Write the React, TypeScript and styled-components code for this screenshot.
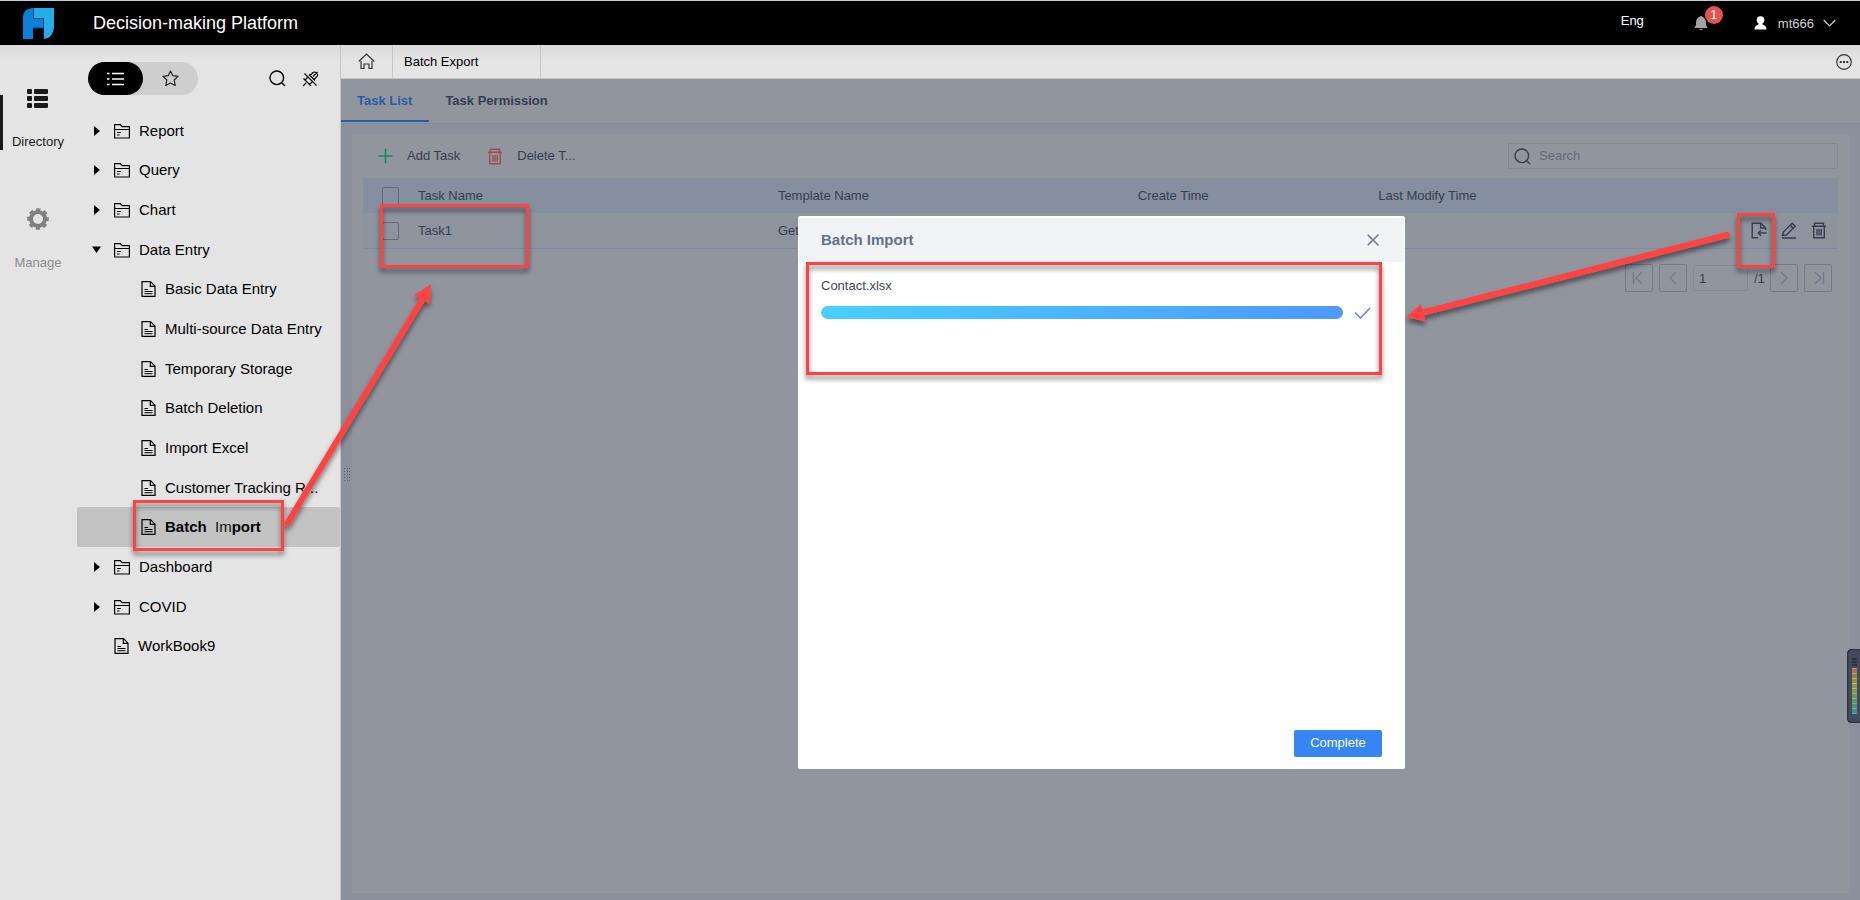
import React from "react";
import styled, { createGlobalStyle, css } from "styled-components";

const GlobalStyle = createGlobalStyle`
  *, *::before, *::after { box-sizing: border-box; }
  body { margin: 0; background: #e4e4e4; }
  body, button, input, table { font-family: "Liberation Sans", Arial, sans-serif; font-size: 13px; }
  svg { display: block; flex: none; }
`;

const Page = styled.div`
  position: relative;
  display: flex;
  flex-direction: column;
  min-height: 100vh;
  overflow: hidden;
  color: #000;
`;

const plainButton = css`
  padding: 0;
  border: 0;
  background: none;
  color: inherit;
  cursor: pointer;
`;

/* Header */

const Header = styled.header`
  display: flex;
  align-items: center;
  height: 45px;
  padding: 0 24px 0 22px;
  border-top: 1px solid #c9cdc9;
  background: #000;
  color: #fff;
`;

const Title = styled.h1`
  flex: 1;
  margin: 0 0 0 38px;
  font-size: 18px;
  font-weight: 400;
  line-height: 20px;
`;

const LanguageButton = styled.button`
  ${plainButton}
  height: 22px;
  margin: 0 50px 6px 0;
`;

const BellButton = styled.button`
  ${plainButton}
  position: relative;
  width: 14px;
  height: 16px;
  margin-right: 46px;
  color: #a3a3a3;
`;

const Badge = styled.span`
  position: absolute;
  top: -9px;
  left: 11px;
  width: 18px;
  height: 18px;
  border-radius: 9px;
  background: #e65251;
  color: #fff;
  font-size: 13px;
  line-height: 18px;
  text-align: center;
`;

const UserButton = styled.button`
  ${plainButton}
  display: flex;
  align-items: center;
  height: 22px;
  color: #d0d0d0;
  span { margin: 0 9px 0 11px; }
`;

const Body = styled.div`
  display: flex;
  flex: 1;
  background: linear-gradient(#d9d9d9, #e4e4e4 14px);
`;

/* Left rail */

const Rail = styled.nav`
  display: flex;
  flex-direction: column;
  gap: 66px;
  width: 77px;
  padding-top: 50px;
`;

const RailItem = styled.button<{ $active?: boolean }>`
  ${plainButton}
  display: flex;
  flex-direction: column;
  align-items: center;
  justify-content: space-between;
  height: 55px;
  padding-bottom: 1px;
  border-left: 3px solid ${(p) => (p.$active ? "#1a1a1a" : "transparent")};
  padding-right: 4px;
  color: ${(p) => (p.$active ? "#1a1a1a" : "#8c8c8c")};
  line-height: 15px;
  svg { margin-top: -9px; }
`;

/* Directory tree */

const Sidebar = styled.aside`
  display: flex;
  flex-direction: column;
  width: 264px;
  border-right: 1px solid #c6c6c6;
`;

const SideTools = styled.div`
  display: flex;
  align-items: center;
  gap: 16px;
  height: 33px;
  margin: 17px 21px 16px 11px;
`;

const Switcher = styled.div`
  display: flex;
  width: 110px;
  height: 33px;
  margin-right: auto;
  border-radius: 17px;
  background: #cecece;
`;

const SwitchButton = styled.button<{ $active?: boolean }>`
  ${plainButton}
  display: flex;
  flex: 1;
  align-items: center;
  justify-content: center;
  border-radius: 17px;
  background: ${(p) => (p.$active ? "#000" : "transparent")};
  color: ${(p) => (p.$active ? "#fff" : "#222")};
`;

const IconButton = styled.button`
  ${plainButton}
  display: inline-flex;
  align-items: center;
  justify-content: center;
`;

const Tree = styled.ul`
  display: grid;
  grid-template-columns: minmax(0, 1fr);
  grid-auto-rows: 1fr;
  height: 555px;
  margin: 0;
  padding: 0;
  list-style: none;
`;

const TreeRow = styled.li<{ $level: number; $selected?: boolean }>`
  display: flex;
  align-items: center;
  padding: 0 13px 0 ${(p) => (p.$level === 2 ? 64 : 15)}px;
  border-radius: 2px;
  background: ${(p) => (p.$selected ? "#c2c2c2" : "transparent")};
  font-weight: ${(p) => (p.$selected ? 700 : 400)};
`;

const Caret = styled.span`
  display: flex;
  flex: none;
  width: 22px;
`;

const TreeLink = styled.a`
  display: flex;
  align-items: center;
  gap: 9px;
  min-width: 0;
  color: #000;
  font-size: 15px;
  line-height: 20px;
  text-decoration: none;
  white-space: nowrap;
`;

const TreeText = styled.span`
  overflow: hidden;
  text-overflow: ellipsis;
`;

const Patch = styled.span`
  color: #111;
  font-weight: 400;
`;

/* Main area */

const Main = styled.main`
  display: flex;
  flex: 1;
  flex-direction: column;
  min-width: 0;
`;

const PageTabs = styled.div`
  display: flex;
  align-items: center;
  height: 34px;
  padding-right: 8px;
  border-bottom: 1px solid #c6c6c6;
`;

const HomeTab = styled.button`
  ${plainButton}
  display: flex;
  align-items: center;
  justify-content: center;
  width: 52px;
  height: 33px;
  border-right: 1px solid #c6c6c6;
`;

const PageTab = styled.button`
  ${plainButton}
  width: 148px;
  height: 33px;
  margin-right: auto;
  padding-left: 11px;
  border-right: 1px solid #c6c6c6;
  text-align: left;
`;

const Workspace = styled.section`
  position: relative;
  display: flex;
  flex: 1;
  flex-direction: column;
  background: #8a919c;
  color: #353e50;
`;

const SubTabs = styled.div`
  display: flex;
  height: 45px;
  border-bottom: 1px solid #848b97;
  background: #91959e;
`;

const SubTab = styled.button<{ $active?: boolean }>`
  ${plainButton}
  height: 43px;
  padding: 2px 17px 0 16px;
  border-bottom: 2px solid ${(p) => (p.$active ? "#2c5ba5" : "transparent")};
  color: ${(p) => (p.$active ? "#2c5ba5" : "#353e50")};
  font-weight: 700;
`;

const Panel = styled.div`
  flex: 1;
  margin: 10px 11px 7px;
  padding: 9px 11px;
  background: #91959e;
`;

const Toolbar = styled.div`
  display: flex;
  align-items: center;
  height: 26px;
  margin-bottom: 9px;
  padding-left: 15px;
`;

const ToolButton = styled.button`
  ${plainButton}
  display: flex;
  align-items: center;
  gap: 14px;
  margin-right: 27px;
  span { padding-bottom: 2px; }
`;

const SearchBox = styled.label`
  display: flex;
  align-items: center;
  gap: 8px;
  width: 330px;
  height: 26px;
  margin-left: auto;
  padding: 0 5px;
  border: 1px solid #838a97;
  border-radius: 2px;
`;

const SearchInput = styled.input`
  flex: 1;
  min-width: 0;
  padding: 0 0 2px;
  border: 0;
  outline: 0;
  background: none;
  color: #353e50;
  &::placeholder { color: #646b7a; opacity: 1; }
`;

const Table = styled.table`
  width: 100%;
  border-collapse: separate;
  border-spacing: 0;
  table-layout: fixed;
  th, td {
    height: 35px;
    padding: 0 8px;
    font-weight: 400;
    line-height: 16px;
    text-align: left;
    white-space: nowrap;
  }
  th { background: #858f9f; }
  td { height: 36px; background: #8e949d; border-bottom: 1px solid #7c8ba5; }
  th:first-child, td:first-child { padding: 0 0 0 19px; }
  td:last-child { padding-right: 11px; }
`;

const CheckColumn = styled.col`
  width: 47px;
`;

const Column = styled.col<{ $share?: string }>`
  width: ${(p) => p.$share ?? "auto"};
`;

const Check = styled.input`
  display: block;
  width: 17px;
  height: 18px;
  margin: 0;
  appearance: none;
  border: 1px solid #626a79;
  border-radius: 2px;
`;

const Actions = styled.div`
  display: flex;
  justify-content: flex-end;
  gap: 14px;
`;

const Pager = styled.nav`
  display: flex;
  align-items: center;
  justify-content: flex-end;
  gap: 6px;
  margin-top: 15px;
  padding-right: 6px;
`;

const PageButton = styled.button`
  ${plainButton}
  display: flex;
  align-items: center;
  justify-content: center;
  width: 28px;
  height: 28px;
  border: 1px solid #737b8a;
  border-radius: 2px;
  color: #727a89;
`;

const PageInput = styled.input`
  width: 55px;
  height: 26px;
  padding: 0 5px;
  border: 1px solid #838a97;
  border-radius: 2px;
  background: none;
  color: #353e50;
`;

const PageCount = styled.span`
  width: 10px;
`;

const SplitHandle = styled.div`
  position: absolute;
  top: 389px;
  left: 3px;
`;

/* Import dialog */

const ModalLayer = styled.div`
  position: absolute;
  inset: 0;
  display: flex;
  align-items: center;
  justify-content: center;
  padding: 6px 0 0 2px;
`;

const Modal = styled.div`
  display: flex;
  flex-direction: column;
  width: 607px;
  max-width: 90%;
  min-height: 553px;
  padding: 2px 1px 12px;
  border-radius: 2px;
  background: #fff;
`;

const ModalHeader = styled.div`
  display: flex;
  align-items: center;
  justify-content: space-between;
  height: 44px;
  padding: 0 25px 0 22px;
  background: #f2f3f7;
  color: #667184;
`;

const ModalTitle = styled.h2`
  margin: 0;
  padding-bottom: 2px;
  font-size: 15px;
  font-weight: 700;
`;

const ModalBody = styled.div`
  flex: 1;
  padding: 16px 33px 16px 22px;
`;

const FileLabel = styled.div`
  color: #3d4759;
  line-height: 15px;
`;

const ProgressRow = styled.div`
  display: flex;
  align-items: center;
  gap: 11px;
  margin-top: 13px;
`;

const Progress = styled.div`
  flex: 1;
  height: 13px;
  border-radius: 7px;
  background: linear-gradient(90deg, #48d0ff, #4f98fa);
`;

const ModalFooter = styled.div`
  display: flex;
  justify-content: flex-end;
  padding: 0 22px;
`;

const PrimaryButton = styled.button`
  ${plainButton}
  width: 88px;
  height: 27px;
  padding-bottom: 2px;
  border-radius: 2px;
  background: #3685f2;
  color: #fff;
`;

/* Callouts drawn over the page */

const Callouts = styled.svg`
  position: absolute;
  top: 0;
  left: 0;
  pointer-events: none;
`;

const Meter = styled.svg`
  position: absolute;
  top: 649px;
  right: 0;
`;

const stroke = { fill: "none", stroke: "currentColor", strokeWidth: 1.2 } as const;

const Logo = () => (
  <svg width="33" height="33" viewBox="0 0 33 33" aria-hidden="true">
    <path d="M10 1H12V12H21V21H11V32H1V9Q2 2 10 1Z" fill="#0a81d8" />
    <path d="M12 1H32V20Q31 31 22 32V11H12Z" fill="#22aee8" />
    <path d="M11.500 1V11.500H21.500V21H11" fill="none" stroke="#04406e" />
  </svg>
);

const FolderIcon = () => (
  <svg width="16" height="16" viewBox="0 0 16 16" {...stroke} aria-hidden="true">
    <path d="M.6 15V1.600H6.200L8.200 3.600H15.400V15ZM.6 6.500H15.400" />
    <path d="M3 9.500H7M3 12H5.500" />
  </svg>
);

const FileIcon = () => (
  <svg width="15" height="16" viewBox="0 0 15 16" {...stroke} aria-hidden="true">
    <path d="M1 .7H9.500L14 5.200V15.300H1ZM9.300 .7V5.400H14" />
    <path d="M3.500 8.500H7M3.500 10.500H11.500M3.500 12.700H11.500" strokeWidth="1" />
  </svg>
);

const SearchIcon = () => (
  <svg width="17" height="17" viewBox="0 0 17 17" {...stroke} strokeWidth="1.400" aria-hidden="true">
    <circle cx="7.800" cy="7.800" r="6.800" />
    <path d="M12.700 12.700L16 16" />
  </svg>
);

const PinIcon = () => (
  <svg width="17" height="16" viewBox="0 0 17 16" {...stroke} strokeWidth="1.100" aria-hidden="true">
    <path d="M2.500 2.500L14.500 14.500M1 15L4 12M1.500 7.500L9 15M3 9L5.500 6.500M7.500 13.500L10 11M8 4.500L11 1.500Q12.500 .3 14.500 2T15 5.500L12 8.500M7 3.500L13 9.500M11 5.500L15.500 1" />
  </svg>
);

const TrashIcon = ({ color }: { color?: string }) => (
  <svg width="16" height="17" viewBox="0 0 16 17" {...stroke} strokeWidth="1.400" color={color} aria-hidden="true">
    <path d="M3.500 3.500V1.200H12.500V3.500M1 4.200H15M2.700 4.500V15.800H13.300V4.500M6 7V13.500M8.100 7V13.500M10.200 7V13.500" />
  </svg>
);

const ImportIcon = () => (
  <svg width="16" height="17" viewBox="0 0 16 17" {...stroke} strokeWidth="1.400" aria-hidden="true">
    <path d="M7 15.700H1.200V1.200H10L14.600 6V8M9.600 1.200V6H14.600M15.500 11H7.500M10 8.500L7.200 11L10 13.700" />
  </svg>
);

const EditIcon = () => (
  <svg width="16" height="17" viewBox="0 0 16 17" {...stroke} strokeWidth="1.400" aria-hidden="true">
    <path d="M1.500 13.500L2.300 10L11.200 1.200L14.200 4.200L5.300 13L1.500 13.500ZM9.300 3.200L12.200 6.200M1 16H15" />
  </svg>
);

const ChevronIcon = ({ flip, bar }: { flip?: boolean; bar?: boolean }) => (
  <svg width="14" height="14" viewBox="0 0 14 14" {...stroke} strokeWidth="1.400" aria-hidden="true">
    <path d={flip ? "M4 1L10 7L4 13" : "M10 1L4 7L10 13"} />
    {bar && <path d={flip ? "M12.500 1V13" : "M1.500 1V13"} />}
  </svg>
);

type Kind = "folder" | "open" | "file" | "leaf";

const nodes: { name: string; kind: Kind }[] = [
  { name: "Report", kind: "folder" },
  { name: "Query", kind: "folder" },
  { name: "Chart", kind: "folder" },
  { name: "Data Entry", kind: "open" },
  { name: "Basic Data Entry", kind: "file" },
  { name: "Multi-source Data Entry", kind: "file" },
  { name: "Temporary Storage", kind: "file" },
  { name: "Batch Deletion", kind: "file" },
  { name: "Import Excel", kind: "file" },
  { name: "Customer Tracking R...", kind: "file" },
  { name: "Batch Import", kind: "file" },
  { name: "Dashboard", kind: "folder" },
  { name: "COVID", kind: "folder" },
  { name: "WorkBook9", kind: "leaf" },
];

const TreeNode = ({ name, kind }: { name: string; kind: Kind }) => {
  const selected = name === "Batch Import";
  return (
    <TreeRow $level={kind === "file" ? 2 : 1} $selected={selected}>
      {kind !== "file" && (
        <Caret>
          {kind === "folder" && (
            <svg width="9" height="10" viewBox="0 0 9 10"><path d="M2 0L8 5L2 10Z" /></svg>
          )}
          {kind === "open" && (
            <svg width="9" height="10" viewBox="0 0 9 10"><path d="M0 1.500H9L4.500 8Z" /></svg>
          )}
        </Caret>
      )}
      <TreeLink href="#">
        {kind === "file" || kind === "leaf" ? <FileIcon /> : <FolderIcon />}
        <TreeText>
          {selected ? <>Batch&nbsp; <Patch>Im</Patch>port</> : name}
        </TreeText>
      </TreeLink>
    </TreeRow>
  );
};

const meterColors = [
  "#dd8a5e", "#cfa04a", "#d0b540", "#c3c44a", "#b2c650",
  "#98c260", "#80c26c", "#66ba84", "#52bba0", "#48bbb0",
];

const splitDots = [0, 3, 6, 9, 12].flatMap((y) => [0, 3, 5].map((x) => ({ x, y })));

export default function App() {
  return (
    <Page>
      <GlobalStyle />
      <Header>
        <Logo />
        <Title>Decision-making Platform</Title>
        <LanguageButton>Eng</LanguageButton>
        <BellButton aria-label="Notifications">
          <svg width="14" height="16" viewBox="0 0 14 16" fill="currentColor">
            <path d="M6 1.500Q7 0 8 1.500Q12 3 12 8V10L13.500 13H.5L2 10V8Q2 3 6 1.500ZM5 14H9Q7 16 5 14Z" />
          </svg>
          <Badge>1</Badge>
        </BellButton>
        <UserButton>
          <svg width="13" height="14" viewBox="0 0 13 14" fill="#fff">
            <circle cx="6.500" cy="4" r="3.800" />
            <path d="M4.500 6H8.500V8.500Q12.500 9.500 12.500 13.500H.5Q.5 9.500 4.500 8.500Z" />
          </svg>
          <span>mt666</span>
          <svg width="13" height="8" viewBox="0 0 13 8" {...stroke}><path d="M.7 1L6.500 7L12.300 1" /></svg>
        </UserButton>
      </Header>

      <Body>
        <Rail>
          <RailItem $active>
            <svg width="22" height="24" viewBox="0 0 22 24" fill="currentColor" aria-hidden="true">
              {[3, 10, 17].map((y) => (
                <g key={y}>
                  <rect x="0" y={y} width="5" height="5" rx="1" />
                  <rect x="7" y={y} width="14" height="5" rx="1" />
                </g>
              ))}
            </svg>
            Directory
          </RailItem>
          <RailItem>
            <svg width="22" height="24" viewBox="0 0 22 24" fill="none" stroke="#808080" aria-hidden="true">
              <circle cx="11" cy="12" r="7" strokeWidth="4" />
              <circle cx="11" cy="12" r="9.500" strokeWidth="2.600" strokeDasharray="4.200 3.260" strokeDashoffset="2.100" />
            </svg>
            Manage
          </RailItem>
        </Rail>

        <Sidebar>
          <SideTools>
            <Switcher>
              <SwitchButton $active aria-label="Directory list">
                <svg width="17" height="14" viewBox="0 0 17 14" {...stroke} strokeWidth="1.500">
                  <path d="M5 1.500H17M5 7H17M5 12.500H17M0 1.500H2.500M0 7H2.500M0 12.500H2.500" />
                </svg>
              </SwitchButton>
              <SwitchButton aria-label="Favourites">
                <svg width="17" height="17" viewBox="0 0 17 17" {...stroke} strokeLinejoin="round">
                  <path d="M8.500 1L10.800 5.700L16 6.400L12.200 10L13.200 15.500L8.500 13L3.800 15.500L4.800 10L1 6.400L6.200 5.700Z" />
                </svg>
              </SwitchButton>
            </Switcher>
            <IconButton aria-label="Search directory"><SearchIcon /></IconButton>
            <IconButton aria-label="Unpin"><PinIcon /></IconButton>
          </SideTools>
          <Tree>
            {nodes.map((n) => <TreeNode key={n.name} {...n} />)}
          </Tree>
        </Sidebar>

        <Main>
          <PageTabs>
            <HomeTab aria-label="Home">
              <svg width="17" height="17" viewBox="0 0 17 17" {...stroke} color="#333">
                <path d="M.7 8.500L8.500 1L16.300 8.500M3 8V15.500H6V11H11V15.500H14V8" />
              </svg>
            </HomeTab>
            <PageTab>Batch Export</PageTab>
            <IconButton aria-label="More">
              <svg width="16" height="16" viewBox="0 0 16 16" {...stroke} color="#333">
                <circle cx="8" cy="8" r="7.300" />
                <path d="M3.700 8H5.700M7 8H9M10.300 8H12.300" strokeWidth="2" />
              </svg>
            </IconButton>
          </PageTabs>

          <Workspace>
            <SubTabs>
              <SubTab $active>Task List</SubTab>
              <SubTab>Task Permission</SubTab>
            </SubTabs>
            <Panel>
              <Toolbar>
                <ToolButton>
                  <svg width="15" height="14" viewBox="0 0 15 14" fill="none" stroke="#1c8560" strokeWidth="1.600">
                    <path d="M7.500 0V14M.5 7H14.500" />
                  </svg>
                  <span>Add Task</span>
                </ToolButton>
                <ToolButton>
                  <TrashIcon color="#a24b57" />
                  <span>Delete T...</span>
                </ToolButton>
                <SearchBox>
                  <SearchIcon />
                  <SearchInput type="text" placeholder="Search" aria-label="Search" />
                </SearchBox>
              </Toolbar>

              <Table>
                <colgroup>
                  <CheckColumn />
                  <Column $share="24.4%" />
                  <Column $share="24.4%" />
                  <Column $share="16.3%" />
                  <Column />
                </colgroup>
                <thead>
                  <tr>
                    <th><Check type="checkbox" aria-label="Select all tasks" /></th>
                    <th>Task Name</th>
                    <th>Template Name</th>
                    <th>Create Time</th>
                    <th>Last Modify Time</th>
                  </tr>
                </thead>
                <tbody>
                  <tr>
                    <td><Check type="checkbox" aria-label="Select Task1" /></td>
                    <td>Task1</td>
                    <td>Get</td>
                    <td />
                    <td>
                      <Actions>
                        <IconButton aria-label="Import"><ImportIcon /></IconButton>
                        <IconButton aria-label="Edit"><EditIcon /></IconButton>
                        <IconButton aria-label="Delete"><TrashIcon /></IconButton>
                      </Actions>
                    </td>
                  </tr>
                </tbody>
              </Table>

              <Pager aria-label="Pages">
                <PageButton aria-label="First page"><ChevronIcon bar /></PageButton>
                <PageButton aria-label="Previous page"><ChevronIcon /></PageButton>
                <PageInput type="text" defaultValue="1" aria-label="Page number" />
                <PageCount>/1</PageCount>
                <PageButton aria-label="Next page"><ChevronIcon flip /></PageButton>
                <PageButton aria-label="Last page"><ChevronIcon flip bar /></PageButton>
              </Pager>
            </Panel>

            <SplitHandle>
              <svg width="7" height="14" viewBox="0 0 7 14" fill="#5d6575">
                {splitDots.map((d) => <rect key={`${d.x}-${d.y}`} x={d.x} y={d.y} width="1" height="1" />)}
              </svg>
            </SplitHandle>

            <ModalLayer>
              <Modal role="dialog" aria-labelledby="import-title">
                <ModalHeader>
                  <ModalTitle id="import-title">Batch Import</ModalTitle>
                  <IconButton aria-label="Close">
                    <svg width="12" height="12" viewBox="0 0 12 12" {...stroke} strokeWidth="1.400">
                      <path d="M.7 .7L11.300 11.300M11.300 .7L.7 11.300" />
                    </svg>
                  </IconButton>
                </ModalHeader>
                <ModalBody>
                  <FileLabel id="import-file">Contact.xlsx</FileLabel>
                  <ProgressRow>
                    <Progress role="progressbar" aria-labelledby="import-file" aria-valuenow={100} />
                    <svg width="17" height="12" viewBox="0 0 17 12" fill="none" stroke="#5a82f2" strokeWidth="1.500">
                      <path d="M1 5.500L6.500 11L16 1" />
                    </svg>
                  </ProgressRow>
                </ModalBody>
                <ModalFooter>
                  <PrimaryButton>Complete</PrimaryButton>
                </ModalFooter>
              </Modal>
            </ModalLayer>
          </Workspace>
        </Main>
      </Body>

      <Meter width="13" height="74" viewBox="0 0 13 74" aria-hidden="true">
        <path d="M13 .5H5Q.5 .5 .5 6V68Q.5 73.500 5 73.500H13" fill="#434a5b" stroke="#2d323e" strokeWidth="1.500" />
        {[9, 12, 15].map((y) => <rect key={y} x="5" y={y} width="5" height="2" fill="#2c313d" />)}
        {meterColors.map((c, i) => (
          <g key={c} fill={c}>
            <rect x="5" y={19 + i * 5} width="5" height="1" />
            {i < 9 && <rect x="5" y={20 + i * 5} width="5" height="4" opacity=".6" />}
          </g>
        ))}
      </Meter>

      <Callouts width="1860" height="900" viewBox="0 0 1860 900" aria-hidden="true">
        <defs>
          <filter id="lift" x="-20%" y="-20%" width="140%" height="150%">
            <feDropShadow dx="0" dy="4" stdDeviation="2.500" floodColor="#000" floodOpacity=".5" />
          </filter>
        </defs>
        <g fill="none" stroke="#ff4343" strokeWidth="3" filter="url(#lift)">
          <rect x="134.500" y="501.500" width="148" height="48" />
          <rect x="381.500" y="205.500" width="146" height="61" />
          <rect x="807.500" y="263.500" width="573" height="110" />
          <rect x="1738.500" y="214.500" width="35" height="52" />
          <path d="M287.500 523L422 300" strokeWidth="6" strokeLinecap="round" />
          <path d="M1727 235L1421 313" strokeWidth="6" strokeLinecap="round" />
          <path d="M431 284L429.700 304L414.500 295Z" fill="#ff4343" stroke="none" />
          <path d="M1406 317L1421 304L1425.500 321.500Z" fill="#ff4343" stroke="none" />
        </g>
      </Callouts>
    </Page>
  );
}
